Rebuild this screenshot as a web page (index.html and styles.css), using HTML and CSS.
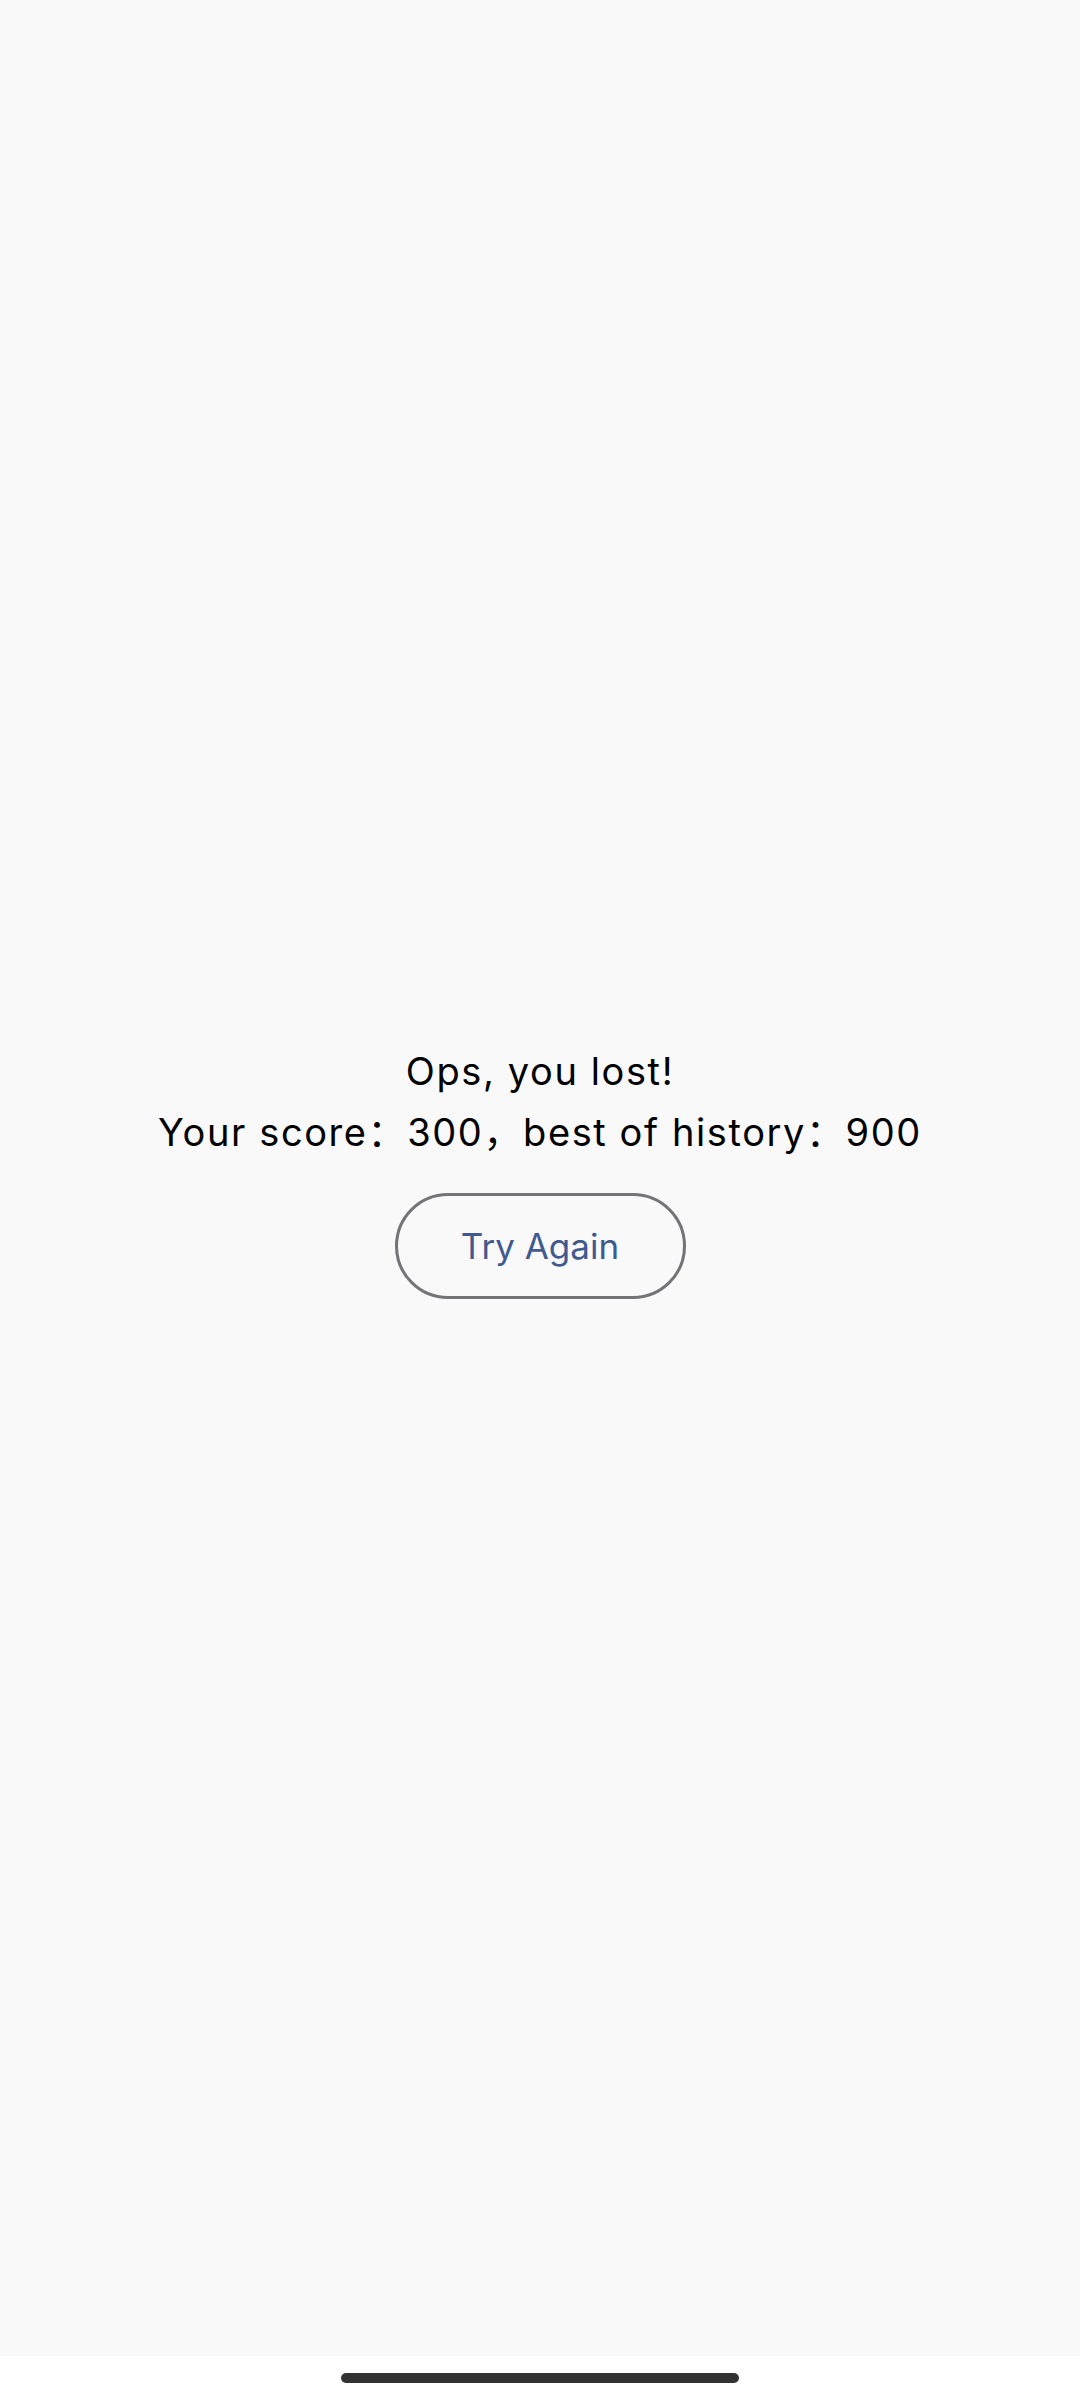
FILE: index.html
```html
<!DOCTYPE html>
<html lang="en">
<head>
<meta charset="utf-8">
<title>Game Over</title>
<link rel="stylesheet" href="styles.css">
</head>
<body>
<main class="screen">
  <div class="result">
    <p class="line">Ops, you lost!</p>
    <p class="line">Your score：300，best of history：900</p>
    <button class="retry" type="button">Try Again</button>
  </div>
</main>
<div class="navbar"><span class="home-indicator"></span></div>
</body>
</html>
```
FILE: styles.css
```css
html, body {
  margin: 0;
  padding: 0;
  background: #ffffff;
}
body {
  width: 1080px;
  height: 2400px;
  overflow: hidden;
  font-family: Inter, "Noto Sans CJK SC", sans-serif;
}
.screen {
  height: 2356px;
  background: #f9f9f9;
  display: flex;
  align-items: center;
  justify-content: center;
}
.result {
  display: flex;
  flex-direction: column;
  align-items: center;
  margin-bottom: 16px;
}
.line {
  margin: 0;
  font-size: 38px;
  line-height: 61px;
  color: #000000;
  letter-spacing: 1.6px;
}
.retry {
  margin-top: 30px;
  width: 291px;
  height: 106px;
  border: 3px solid #747478;
  border-radius: 53px;
  background: transparent;
  color: #40598f;
  font-family: Inter, "Noto Sans CJK SC", sans-serif;
  font-size: 35px;
  padding: 0;
}
.navbar {
  height: 44px;
  background: #ffffff;
  display: flex;
  justify-content: center;
  padding-top: 17px;
  box-sizing: border-box;
}
.home-indicator {
  width: 398px;
  height: 10px;
  border-radius: 5px;
  background: #333333;
}
```
